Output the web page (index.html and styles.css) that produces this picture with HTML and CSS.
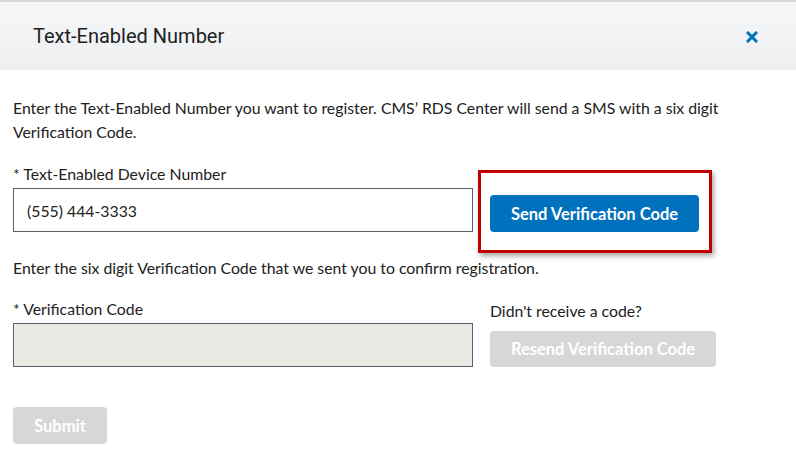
FILE: index.html
```html
<!DOCTYPE html>
<html lang="en">
<head>
  <meta charset="UTF-8" />
  <title>Text-Enabled Number</title>
  <link rel="stylesheet" href="styles.css">
</head>
<body>
  <div class="modal">
    <div class="modal-header">
      <h2>Text-Enabled Number</h2>
      <span class="close" aria-label="Close">
        <svg width="12" height="12" viewBox="0 0 12 12"><path d="M2 2 L10 10 M10 2 L2 10" stroke="#0071bc" stroke-width="3" stroke-linecap="square"/></svg>
      </span>
    </div>
    <div class="modal-body">
      <p class="intro">Enter the Text-Enabled Number you want to register. CMS’ RDS Center will send a SMS with a six digit Verification Code.</p>

      <div class="row first">
        <div class="field">
          <label>* Text-Enabled Device Number</label>
          <input type="text" class="text-input" value="(555) 444-3333">
        </div>
        <div class="highlight">
          <button class="btn btn-primary">Send Verification Code</button>
        </div>
      </div>

      <p class="hint">Enter the six digit Verification Code that we sent you to confirm registration.</p>

      <div class="row second">
        <div class="field">
          <label>* Verification Code</label>
          <input type="text" class="text-input disabled" disabled>
        </div>
        <div class="resend">
          <span class="resend-label">Didn't receive a code?</span>
          <button class="btn btn-disabled resend-btn" disabled>Resend Verification Code</button>
        </div>
      </div>

      <button class="btn btn-disabled submit" disabled>Submit</button>
    </div>
  </div>
</body>
</html>
```

FILE: styles.css
```css
body {
  margin: 0;
  font-family: Lato, "Open Sans", sans-serif;
  color: #212121;
  background: #fff;
}
.modal {
  width: 796px;
}
.modal-header {
  height: 70px;
  border-top: 2px solid #d6d7d9;
  background: linear-gradient(#f6f7f8, #eeeff1);
  display: flex;
  align-items: center;
  justify-content: space-between;
  padding: 0 38px 0 33px;
  box-sizing: border-box;
}
.modal-header h2 {
  margin: 0;
  font-family: "Liberation Sans Narrow", "Roboto", sans-serif;
  font-weight: normal;
  font-size: 20px;
  color: #212121;
  padding-bottom: 1px;
}
.close {
  display: flex;
  margin-top: 2px;
}
.modal-body {
  padding: 0 13px;
}
.intro {
  margin: 26px 0 0;
  font-size: 15.8px;
  line-height: 24px;
  padding-right: 50px;
}
.row {
  display: flex;
  align-items: flex-end;
}
.row.first {
  margin-top: 18px;
}
.field {
  width: 460px;
  display: flex;
  flex-direction: column;
}
label {
  font-size: 15.8px;
  line-height: 24px;
  margin-bottom: 2px;
}
.text-input {
  height: 44px;
  box-sizing: border-box;
  border: 1px solid #5b616b;
  padding: 0 13px;
  font-family: inherit;
  font-size: 15.8px;
  color: #212121;
  margin: 0;
}
.text-input.disabled {
  background: #ebe9e3;
}
.btn {
  border: none;
  border-radius: 4px;
  font-family: inherit;
  font-weight: bold;
  font-size: 16.5px;
  color: #fff;
  height: 37px;
  padding: 0 10px;
  cursor: pointer;
}
.btn-primary {
  background: #0071bc;
}
.btn-disabled {
  background: #d6d7d9;
  cursor: default;
}
.highlight {
  margin-left: 5px;
  margin-bottom: -21px;
  border: 3px solid #c00000;
  padding: 22px 10px 18px 9px;
  box-shadow: 2px 3px 5px rgba(0, 0, 0, 0.35);
}
.highlight .btn {
  width: 209px;
}
.hint {
  margin: 24px 0 0;
  font-size: 15.8px;
  line-height: 24px;
}
.row.second {
  margin-top: 17px;
}
.resend {
  margin-left: 17px;
  display: flex;
  flex-direction: column;
}
.resend-label {
  font-size: 15.8px;
  line-height: 24px;
  margin-bottom: 8px;
}
.resend-btn {
  width: 226px;
  height: 36px;
}
.submit {
  margin-top: 40px;
  width: 94px;
}
```
